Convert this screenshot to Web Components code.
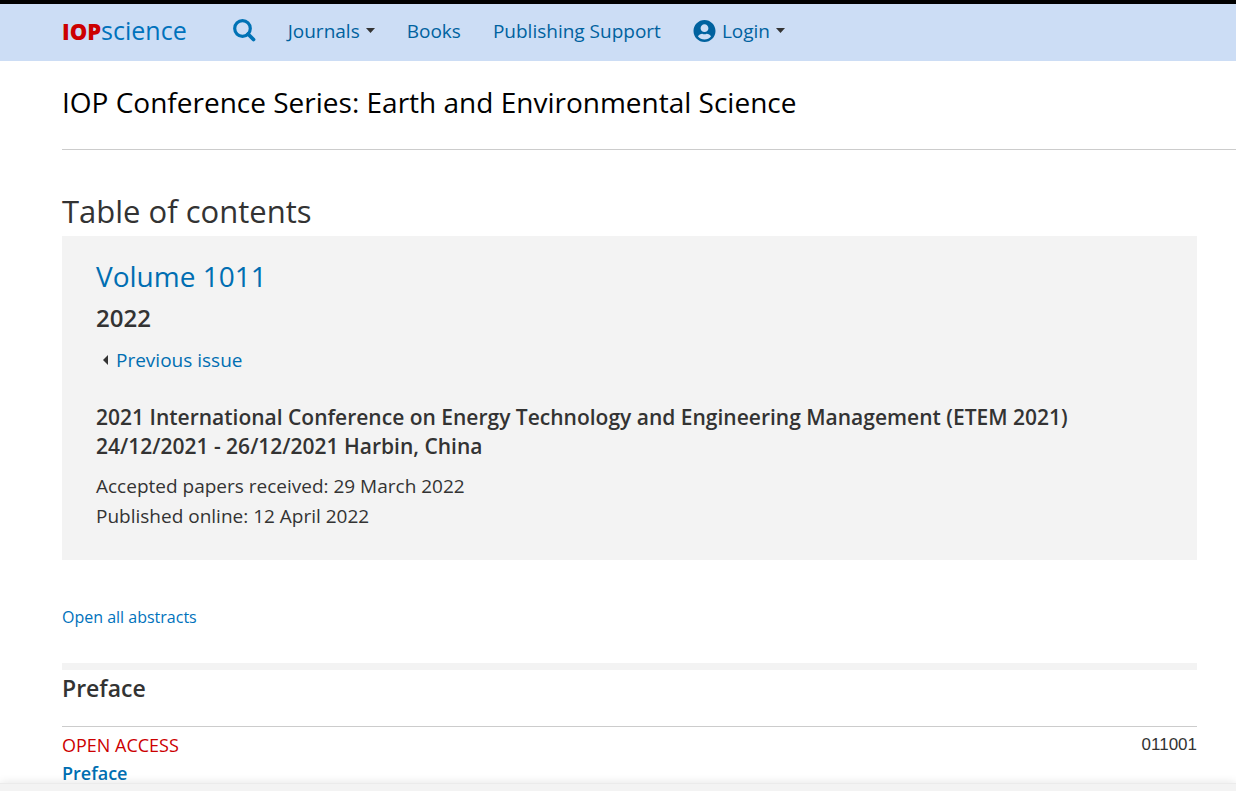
<!DOCTYPE html>
<html lang="en">
<head>
<meta charset="utf-8">
<meta name="viewport" content="width=device-width, initial-scale=1">
<title>IOP Conference Series: Earth and Environmental Science, Volume 1011, 2022 - IOPscience</title>
<style>
  html { background: #fff; }
  body { margin: 0; font-family: "Open Sans", "Noto Sans", sans-serif; font-size: 19px; color: #333; }
</style>
</head>
<body>
<iop-header>
  <iop-nav-item menu>Journals</iop-nav-item>
  <iop-nav-item>Books</iop-nav-item>
  <iop-nav-item>Publishing Support</iop-nav-item>
  <iop-nav-item menu user>Login</iop-nav-item>
</iop-header>
<iop-page>
  <span slot="journal">IOP Conference Series: Earth and Environmental Science</span>
  <span slot="title">Table of contents</span>
  <iop-issue volume="Volume 1011" year="2022">
    <span slot="event">2021 International Conference on Energy Technology and Engineering Management (ETEM 2021)</span>
    <span slot="venue">24/12/2021 - 26/12/2021 Harbin, China</span>
    <span slot="received">Accepted papers received: 29 March 2022</span>
    <span slot="published">Published online: 12 April 2022</span>
  </iop-issue>
  <iop-section heading="Preface">
    <iop-article number="011001">Preface</iop-article>
  </iop-section>
</iop-page>
<iop-notice></iop-notice>
<script>
function define(name, markup, setup) {
  const template = document.createElement('template');
  template.innerHTML = markup;
  customElements.define(name, class extends HTMLElement {
    constructor() {
      super();
      this.attachShadow({ mode: 'open' }).append(template.content.cloneNode(true));
    }
    connectedCallback() {
      if (setup) setup(this, selector => this.shadowRoot.querySelector(selector));
    }
  });
}

define('iop-logo', `
  <style>
    :host { display: block; }
    a { display: flex; align-items: baseline; text-decoration: none; line-height: 32px; color: #0072bc; }
    b { color: #c00; font-size: 22px; font-weight: 800; }
    span { font-size: 25px; }
  </style>
  <a href="#home"><b>IOP</b><span>science</span></a>`);

define('iop-nav-item', `
  <style>
    :host { display: block; }
    a { display: flex; align-items: center; color: #00629f; text-decoration: none; line-height: 28px; }
    svg { display: none; flex: none; }
    :host([user]) .user { display: block; margin-right: 6px; }
    :host([menu]) .caret { display: block; margin-left: 6px; }
  </style>
  <a href="#nav">
    <svg class="user" width="23" height="22" viewBox="0 0 496 496" aria-hidden="true"><path fill="#00629f" d="M248 0C111 0 0 111 0 248s111 248 248 248 248-111 248-248S385 0 248 0zm0 96c48.600 0 88 39.400 88 88s-39.400 88-88 88-88-39.400-88-88 39.400-88 88-88zm0 344c-58.700 0-111.300-26.600-146.500-68.200 18.800-35.400 55.600-59.800 98.500-59.800 2.400 0 4.800.4 7.100 1.100 13 4.200 26.600 6.900 40.900 6.900s28-2.700 40.900-6.900c2.300-.7 4.700-1.100 7.100-1.100 42.900 0 79.700 24.400 98.500 59.800C359.300 413.400 306.700 440 248 440z"/></svg>
    <slot></slot>
    <svg class="caret" width="9" height="5" viewBox="0 0 9 5" aria-hidden="true"><path fill="#333" d="M0 0h9L4.500 5z"/></svg>
  </a>`);

define('iop-header', `
  <style>
    :host { display: block; background: #ccddf5; border-top: 4px solid #000; }
    header { display: flex; align-items: center; min-height: 53px; padding: 0 0 4px 62px; }
    button { display: flex; padding: 0; margin: 0 32px 0 46px; border: 0; background: none; }
    nav { display: flex; gap: 32px; }
  </style>
  <header>
    <iop-logo></iop-logo>
    <button type="button" aria-label="Search">
      <svg width="23" height="23" viewBox="0 0 23 23" fill="none" stroke="#0072b5" aria-hidden="true"><circle cx="9.500" cy="9.500" r="7.800" stroke-width="3.200"/><path d="M15 15l5.500 5.500" stroke-width="3.800" stroke-linecap="round"/></svg>
    </button>
    <nav><slot></slot></nav>
  </header>`);

define('iop-page', `
  <style>
    :host { display: block; padding-left: 62px; }
    h1, h2 { margin: 0; font-weight: 400; }
    h1 { padding: 21px 0 27px; border-bottom: 1px solid #ccc; font-size: 28px; line-height: 40px; color: #000; }
    main { padding-right: 39px; }
    h2 { padding-top: 36px; font-size: 31px; line-height: 50px; }
  </style>
  <h1><slot name="journal"></slot></h1>
  <main><h2><slot name="title"></slot></h2><slot></slot></main>`);

define('iop-issue', `
  <style>
    :host { display: block; background: #f3f3f3; padding: 20px 34px 29px; }
    h2, h3, h4, p { margin: 0; }
    h2 { font-size: 28px; font-weight: 400; line-height: 40px; color: #006eb2; }
    h3 { font-size: 24px; font-weight: 600; line-height: 44px; }
    a { display: flex; align-items: center; gap: 7px; padding-left: 7px; color: #006eb2; text-decoration: none; line-height: 40px; }
    h4 { padding: 23px 0 10px; font-size: 21px; font-weight: 600; line-height: 29px; }
    h4 slot, p { display: block; }
    p { line-height: 30px; }
  </style>
  <h2></h2>
  <h3></h3>
  <a href="#previous"><svg width="6" height="10" viewBox="0 0 6 10" aria-hidden="true"><path fill="#333" d="M5 0v10L0 5z"/></svg><span>Previous issue</span></a>
  <h4><slot name="event"></slot><slot name="venue"></slot></h4>
  <p><slot name="received"></slot></p>
  <p><slot name="published"></slot></p>`, (host, find) => {
    find('h2').textContent = host.getAttribute('volume');
    find('h3').textContent = host.getAttribute('year');
  });

define('iop-section', `
  <style>
    :host { display: block; padding-top: 42px; }
    a { display: inline-block; color: #0072bc; font-size: 16px; line-height: 30px; text-decoration: none; }
    h2 { margin: 31px 0 0; padding-bottom: 20px; border-top: 7px solid #f3f3f3; border-bottom: 1px solid #ccc; font-size: 23px; font-weight: 600; line-height: 36px; }
  </style>
  <a href="#abstracts">Open all abstracts</a>
  <h2></h2>
  <slot></slot>`, (host, find) => {
    find('h2').textContent = host.getAttribute('heading');
  });

define('iop-article', `
  <style>
    :host { display: block; padding-top: 4px; font-size: 18px; line-height: 28px; }
    div { display: flex; justify-content: space-between; }
    b { color: #c00; font-weight: 500; }
    a { color: #006eb2; font-weight: 600; text-decoration: none; }
    .number { font-family: "Liberation Sans", Arial, sans-serif; font-size: 17px; }
  </style>
  <div><b>OPEN ACCESS</b><span class="number"></span></div>
  <a href="#article"><slot></slot></a>`, (host, find) => {
    find('.number').textContent = host.getAttribute('number');
  });

define('iop-notice', `
  <style>
    :host { display: block; position: fixed; left: 0; right: 0; bottom: 0; height: 7px; background: #f3f3f3; border-top: 1px solid #ebebeb; box-shadow: 0 0 10px rgba(0, 0, 0, .12); }
  </style>`);
</script>
</body>
</html>
